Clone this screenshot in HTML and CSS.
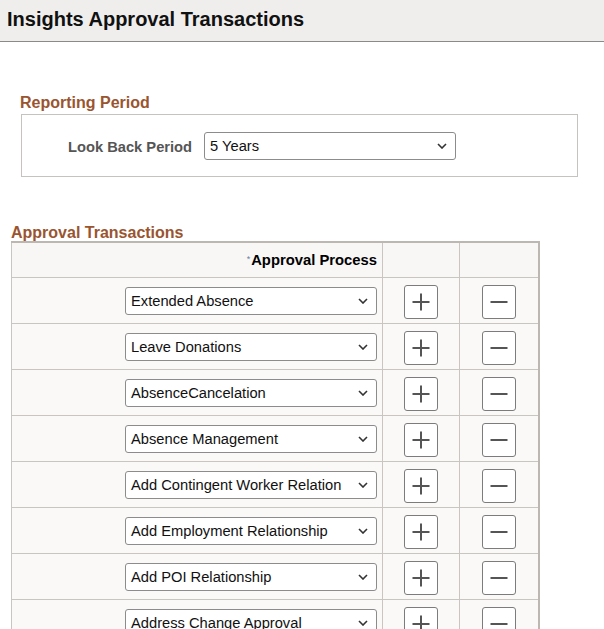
FILE: index.html
```html
<!DOCTYPE html>
<html>
<head>
<meta charset="utf-8">
<link rel="stylesheet" href="styles.css">
</head>
<body>
<header class="page-header"><h1 class="page-title">Insights Approval Transactions</h1></header>
<main class="content">
  <section class="reporting">
    <h2 class="section-title reporting-title">Reporting Period</h2>
    <div class="group-box">
      <span class="field-label">Look Back Period</span>
      <div class="dropdown period-dropdown"><span class="dd-text">5 Years</span><svg class="chev" viewBox="0 0 10 6" width="10" height="6"><path d="M1 1 L5 5 L9 1" fill="none" stroke="#333" stroke-width="1.6"/></svg></div>
    </div>
  </section>
  <section class="approvals">
    <h2 class="section-title approvals-title">Approval Transactions</h2>
    <table class="grid">
      <colgroup><col class="c1"><col class="c2"><col class="c3"></colgroup>
      <thead>
        <tr><th class="col-proc"><span class="req">*</span>Approval Process</th><th class="col-btn"></th><th class="col-btn"></th></tr>
      </thead>
      <tbody id="rows"></tbody>
    </table>
  </section>
</main>
<script src="app.js"></script>
</body>
</html>
```
FILE: app.js
```js
const items = ["Extended Absence","Leave Donations","AbsenceCancelation","Absence Management","Add Contingent Worker Relation","Add Employment Relationship","Add POI Relationship","Address Change Approval"];
const chev = '<svg class="chev" viewBox="0 0 10 6" width="10" height="6"><path d="M1 1 L5 5 L9 1" fill="none" stroke="#333" stroke-width="1.6"/></svg>';
const plus = '<svg viewBox="0 0 20 20" width="20" height="20"><path d="M10 1.5 V18.5 M1.5 10 H18.5" stroke="#555" stroke-width="2" fill="none"/></svg>';
const minus = '<svg viewBox="0 0 20 20" width="20" height="20"><path d="M1.5 10 H18.5" stroke="#555" stroke-width="2" fill="none"/></svg>';
const tb = document.getElementById('rows');
tb.innerHTML = items.map(t => `<tr><td class="col-proc"><div class="dropdown row-dropdown"><span class="dd-text">${t}</span>${chev}</div></td><td class="col-btn"><button class="icon-btn">${plus}</button></td><td class="col-btn"><button class="icon-btn">${minus}</button></td></tr>`).join('');
```
FILE: styles.css
```css
html, body { margin: 0; padding: 0; background: #fff; }
body { font-family: "Liberation Sans", Arial, sans-serif; color: #000; }
.page-header { height: 41px; background: #efeeed; border-bottom: 1px solid #8a8a8a; display: flex; align-items: center; padding-left: 7px; }
.page-title { margin: 0; font-size: 20px; font-weight: bold; color: #111; line-height: 1; padding-bottom: 3px; }
.content { padding-top: 52px; }
.section-title { margin: 0; font-size: 16px; font-weight: bold; color: #9a5530; line-height: 18px; }
.reporting-title { margin-left: 20px; }
.group-box { margin: 2px 0 0 21px; width: 509px; height: 61px; border: 1px solid #c6c2be; display: flex; align-items: center; padding-left: 46px; gap: 12px; }
.field-label { font-size: 14.7px; font-weight: bold; color: #555; padding-top: 2px; }
.dropdown { box-sizing: border-box; height: 28px; border: 1px solid #8c8c8c; border-radius: 3px; background: #fff; display: flex; align-items: center; justify-content: space-between; padding: 0 8px 0 5px; font-size: 14.7px; color: #111; }
.period-dropdown { width: 252px; }
.approvals { margin-top: 47px; }
.approvals-title { margin-left: 11px; line-height: 17px; }
.grid { margin-left: 11px; border-collapse: collapse; width: 527px; border: 2px solid #bcb7b1; border-left-width: 1px; background: #faf9f8; table-layout: fixed; }
.c1 { width: 371px; }
.c2 { width: 77px; }
.c3 { width: 79px; }
.grid th, .grid td { border: 1px solid #c9c5c0; padding: 0; }
.grid thead th { height: 34px; background: #f8f7f6; font-size: 14.8px; font-weight: bold; text-align: right; padding-right: 5px; }
.req { font-size: 9px; color: #6a7fa0; font-weight: normal; vertical-align: 3px; margin-right: 1px; }
.grid tbody td { height: 45px; }
.col-proc { text-align: right; }
.grid tbody td.col-proc { padding-right: 5px; }
.row-dropdown { width: 252px; margin-left: auto; }
.col-btn { text-align: center; }
.icon-btn { width: 34px; height: 34px; border: 1px solid #7c7c7c; border-radius: 3px; background: #fff; padding: 0; display: inline-flex; align-items: center; justify-content: center; vertical-align: middle; margin-top: 2px; }
.chev { flex: none; }
```
